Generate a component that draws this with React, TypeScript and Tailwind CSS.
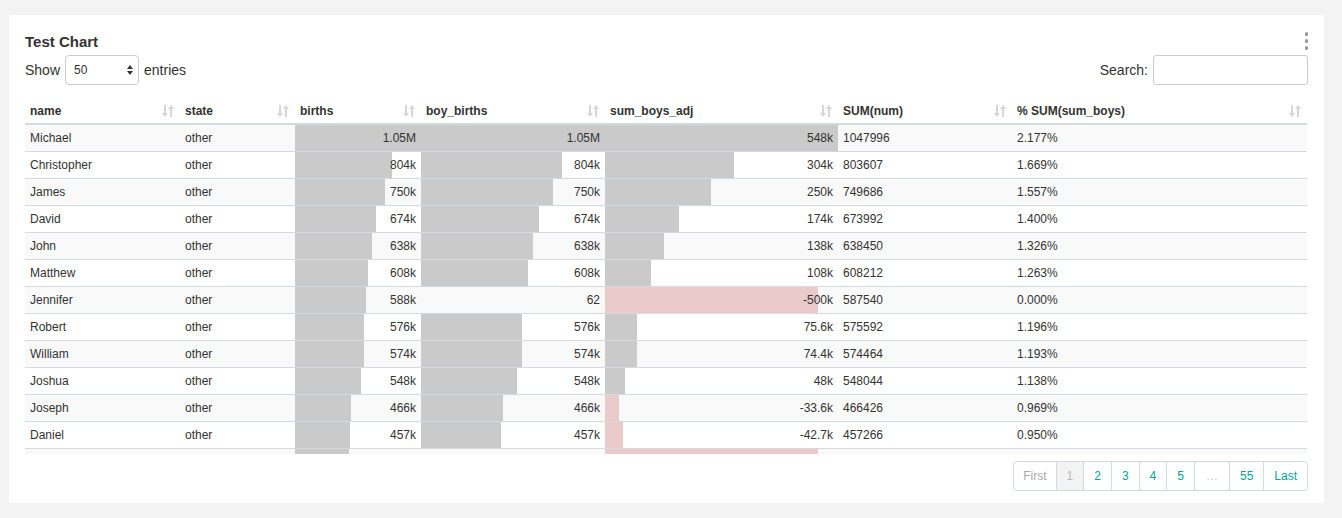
import React from "react";

type Row = {
  name: string;
  births: number;
  birthsLabel: string;
  boys: number;
  boysLabel: string;
  adj: number;
  adjLabel: string;
  sum: string;
  pct: string;
};

const rows: Row[] = [
  { name: "Michael", births: 1047996, birthsLabel: "1.05M", boys: 1047996, boysLabel: "1.05M", adj: 547996, adjLabel: "548k", sum: "1047996", pct: "2.177%" },
  { name: "Christopher", births: 803607, birthsLabel: "804k", boys: 803607, boysLabel: "804k", adj: 303607, adjLabel: "304k", sum: "803607", pct: "1.669%" },
  { name: "James", births: 749686, birthsLabel: "750k", boys: 749686, boysLabel: "750k", adj: 249686, adjLabel: "250k", sum: "749686", pct: "1.557%" },
  { name: "David", births: 673992, birthsLabel: "674k", boys: 673992, boysLabel: "674k", adj: 173992, adjLabel: "174k", sum: "673992", pct: "1.400%" },
  { name: "John", births: 638450, birthsLabel: "638k", boys: 638450, boysLabel: "638k", adj: 138450, adjLabel: "138k", sum: "638450", pct: "1.326%" },
  { name: "Matthew", births: 608212, birthsLabel: "608k", boys: 608212, boysLabel: "608k", adj: 108212, adjLabel: "108k", sum: "608212", pct: "1.263%" },
  { name: "Jennifer", births: 587540, birthsLabel: "588k", boys: 62, boysLabel: "62", adj: -499938, adjLabel: "-500k", sum: "587540", pct: "0.000%" },
  { name: "Robert", births: 575592, birthsLabel: "576k", boys: 575592, boysLabel: "576k", adj: 75592, adjLabel: "75.6k", sum: "575592", pct: "1.196%" },
  { name: "William", births: 574464, birthsLabel: "574k", boys: 574464, boysLabel: "574k", adj: 74464, adjLabel: "74.4k", sum: "574464", pct: "1.193%" },
  { name: "Joshua", births: 548044, birthsLabel: "548k", boys: 548044, boysLabel: "548k", adj: 48044, adjLabel: "48k", sum: "548044", pct: "1.138%" },
  { name: "Joseph", births: 466426, birthsLabel: "466k", boys: 466426, boysLabel: "466k", adj: -33574, adjLabel: "-33.6k", sum: "466426", pct: "0.969%" },
  { name: "Daniel", births: 457266, birthsLabel: "457k", boys: 457266, boysLabel: "457k", adj: -42734, adjLabel: "-42.7k", sum: "457266", pct: "0.950%" },
];

// next row, only its top edge shows above the fold of the scroll area
const peekRow = { births: 449000, boys: 40, adj: -499960 };

const maxBirths = 1047996;
const maxAdj = 547996;

const bar = (value: number, max: number) => {
  const pct = (Math.abs(value) / max) * 100;
  const color = value < 0 ? "#eacaca" : "#cacaca";
  return {
    background: `linear-gradient(to right, ${color} ${pct}%, transparent ${pct}%)`,
  };
};

const SortIcon = () => (
  <svg width="12" height="12" viewBox="0 0 12 12" className="shrink-0">
    <g fill="#d6d6d6" stroke="#d6d6d6">
      <line x1="3" y1="0" x2="3" y2="9" strokeWidth="2" />
      <polygon points="0,8 6,8 3,12" stroke="none" />
      <line x1="9" y1="3" x2="9" y2="12" strokeWidth="2" />
      <polygon points="6,4 12,4 9,0" stroke="none" />
    </g>
  </svg>
);

const columns = [
  { label: "name", w: "w-[155px]" },
  { label: "state", w: "w-[115px]" },
  { label: "births", w: "w-[126px]" },
  { label: "boy_births", w: "w-[184px]" },
  { label: "sum_boys_adj", w: "w-[233px]" },
  { label: "SUM(num)", w: "w-[174px]" },
  { label: "% SUM(sum_boys)", w: "w-[295px]" },
];

const pages = ["First", "1", "2", "3", "4", "5", "…", "55", "Last"];

export default function App() {
  return (
    <div className="min-h-screen bg-[#f3f3f3] pt-[15px] pl-[9px] pr-[18px] font-['Liberation_Sans',Arial,sans-serif] text-[#333]">
      <div className="bg-white px-4 pt-[17px] pb-[12px]">
        {/* Header */}
        <div className="flex items-center justify-between h-5">
          <h2 className="text-[15px] font-bold leading-5 text-[#333]">Test Chart</h2>
          <div className="flex flex-col gap-[3.5px] -translate-y-[1px]">
            <span className="w-[3.5px] h-[3.5px] rounded-full bg-[#8c979f]" />
            <span className="w-[3.5px] h-[3.5px] rounded-full bg-[#8c979f]" />
            <span className="w-[3.5px] h-[3.5px] rounded-full bg-[#8c979f]" />
          </div>
        </div>

        {/* Controls */}
        <div className="mt-[3px] flex items-center justify-between text-[14px]">
          <div className="flex items-center gap-[5px]">
            <span>Show</span>
            <div className="flex items-center justify-between w-[74px] h-[30px] border border-[#ccc] rounded-[4px] pl-2 pr-[5px] text-[12px]">
              <span>50</span>
              <svg width="6" height="10" viewBox="0 0 6 10">
                <polygon points="0,4 6,4 3,0" fill="#333" />
                <polygon points="0,6 6,6 3,10" fill="#333" />
              </svg>
            </div>
            <span>entries</span>
          </div>
          <div className="flex items-center gap-[5px]">
            <span>Search:</span>
            <div className="w-[155px] h-[30px] border border-[#ccc] rounded-[3px]" />
          </div>
        </div>

        {/* Table */}
        <div className="mt-[12px] h-[357px] overflow-hidden">
          <table className="table-fixed border-collapse w-[1282px] text-[12px]">
            <thead>
              <tr className="h-[27px] border-b-2 border-[#d2dbe0]">
                {columns.map((c) => (
                  <th key={c.label} className={`${c.w} p-0 text-left font-bold`}>
                    <div className="flex items-center justify-between pl-[5px] pr-[6px] pt-[1px]">
                      <span>{c.label}</span>
                      <SortIcon />
                    </div>
                  </th>
                ))}
              </tr>
            </thead>
            <tbody>
              {rows.map((r, i) => (
                <tr
                  key={r.name}
                  className={`h-[27px] border-b border-[#d2dbe0] ${i % 2 === 0 ? "bg-[#f9f9f9]" : "bg-white"}`}
                >
                  <td className="px-[5px] py-0">{r.name}</td>
                  <td className="px-[5px] py-0">other</td>
                  <td className="px-[5px] py-0 text-right" style={bar(r.births, maxBirths)}>
                    {r.birthsLabel}
                  </td>
                  <td className="px-[5px] py-0 text-right" style={bar(r.boys, maxBirths)}>
                    {r.boysLabel}
                  </td>
                  <td className="px-[5px] py-0 text-right" style={bar(r.adj, maxAdj)}>
                    {r.adjLabel}
                  </td>
                  <td className="px-[5px] py-0">{r.sum}</td>
                  <td className="px-[5px] py-0">{r.pct}</td>
                </tr>
              ))}
              <tr className="h-[27px] bg-[#f9f9f9]">
                <td />
                <td />
                <td style={bar(peekRow.births, maxBirths)} />
                <td style={bar(peekRow.boys, maxBirths)} />
                <td style={bar(peekRow.adj, maxAdj)} />
                <td />
                <td />
              </tr>
            </tbody>
          </table>
        </div>

        {/* Pagination */}
        <div className="mt-[7px] flex justify-end">
          <ul className="flex h-[30px] border border-[#d2dbe0] rounded-[4px] text-[12px] overflow-hidden">
            {pages.map((p, i) => (
              <li
                key={p + i}
                className={`flex items-center justify-center ${i > 0 ? "border-l border-[#d2dbe0]" : ""} ${
                  p === "First"
                    ? "text-[#aaa] px-[9px]"
                    : p === "1"
                    ? "bg-[#f3f3f3] text-[#bbb] px-[10px]"
                    : p === "…"
                    ? "text-[#ccc] px-[11px]"
                    : "text-[#00a699] px-[10px]"
                }`}
              >
                {p}
              </li>
            ))}
          </ul>
        </div>
      </div>
    </div>
  );
}
